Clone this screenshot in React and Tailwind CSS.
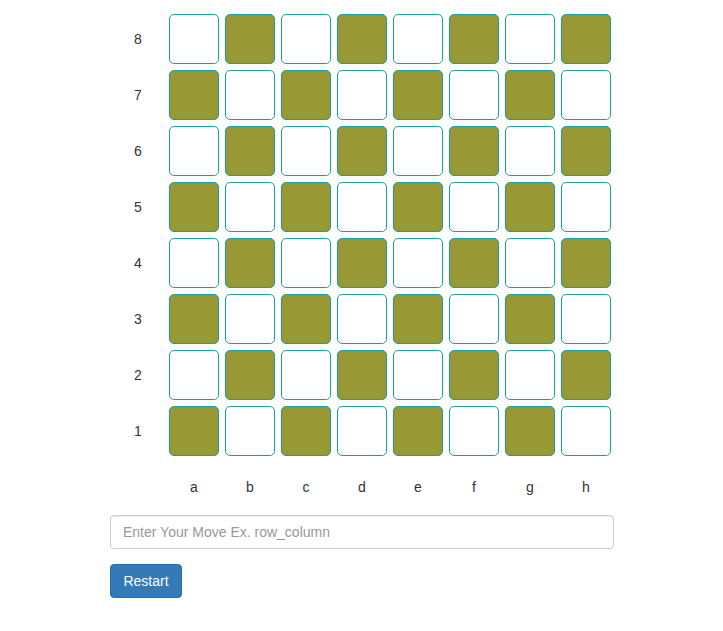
import React from "react";

const cols = ["a", "b", "c", "d", "e", "f", "g", "h"];
const rows = [8, 7, 6, 5, 4, 3, 2, 1];

export default function App() {
  return (
    <div className="min-h-screen bg-white text-[14px] text-[#333] font-['Liberation_Sans',Arial,sans-serif]">
      <div className="w-[504px] ml-[110px] pt-[11px]">
        <div className="flex flex-col">
          {rows.map((r, ri) => (
            <div key={r} className="flex h-[56px]">
              <div className="w-[56px] flex items-center justify-center">{r}</div>
              {cols.map((c, ci) => {
                const dark = (ri + ci) % 2 === 1;
                return (
                  <div key={c} className="w-[56px] h-[56px] p-[3px]">
                    <div
                      className={
                        dark
                          ? "w-full h-full rounded-[5px] border border-[#17a0a0] bg-[#989834]"
                          : "w-full h-full rounded-[5px] border border-[#17a0a0] bg-white"
                      }
                    />
                  </div>
                );
              })}
            </div>
          ))}
          <div className="flex h-[56px]">
            <div className="w-[56px]" />
            {cols.map((c) => (
              <div key={c} className="w-[56px] flex items-center justify-center">
                {c}
              </div>
            ))}
          </div>
        </div>
        <input
          type="text"
          placeholder="Enter Your Move Ex. row_column"
          className="block w-[504px] h-[34px] px-[12px] border border-[#ccc] rounded-[4px] text-[14px] text-[#555] placeholder:text-[#999] outline-none shadow-[inset_0_1px_1px_rgba(0,0,0,0.075)]"
        />
        <button className="mt-[15px] w-[72px] h-[34px] rounded-[4px] bg-[#337ab7] border border-[#2e6da4] text-white text-[14px]">
          Restart
        </button>
      </div>
    </div>
  );
}
